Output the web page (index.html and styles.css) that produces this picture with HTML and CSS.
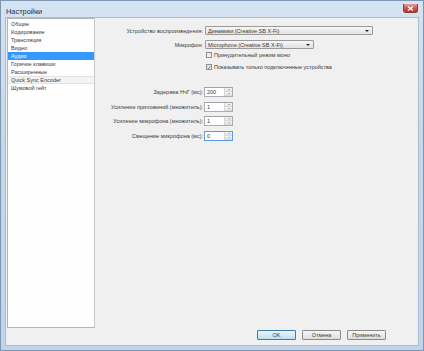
FILE: index.html
```html
<!DOCTYPE html>
<html lang="ru">
  <head>
    <meta charset="UTF-8" />
    <title>Настройки</title>
    <link rel="stylesheet" href="styles.css">
  </head>
  <body>
    <div class="window">
      <div class="titlebar">
        <span class="title">Настройки</span>
        <div class="close-btn">
          <svg width="7" height="5" viewBox="0 0 7 5">
            <path d="M1 0.5 L6 4.5 M6 0.5 L1 4.5" stroke="#fff" stroke-width="1.3" />
          </svg>
        </div>
      </div>

      <div class="client">
        <div class="main">
          <ul class="nav-list">
            <li>Общие</li>
            <li>Кодирование</li>
            <li>Трансляция</li>
            <li>Видео</li>
            <li class="selected">Аудио</li>
            <li>Горячие клавиши</li>
            <li>Расширенные</li>
            <li class="plugin">Quick Sync Encoder</li>
            <li>Шумовой гейт</li>
          </ul>

          <div class="panel">
            <div class="row row-device">
              <label class="label">Устройство воспроизведения:</label>
              <div class="combo combo-wide">
                <span>Динамики (Creative SB X-Fi)</span>
                <span class="arrow"></span>
              </div>
            </div>
            <div class="row row-mic">
              <label class="label">Микрофон:</label>
              <div class="combo combo-narrow">
                <span>Microphone (Creative SB X-Fi)</span>
                <span class="arrow"></span>
              </div>
            </div>
            <div class="check-row check-first">
              <span class="checkbox"></span>
              <span>Принудительный режим моно</span>
            </div>
            <div class="check-row">
              <span class="checkbox checked">
                <svg width="5" height="5" viewBox="0 0 5 5">
                  <path d="M0.7 2.6 L2 4 L4.4 0.8" stroke="#3b4a5e" stroke-width="0.9" fill="none" />
                </svg>
              </span>
              <span>Показывать только подключенные устройства</span>
            </div>

            <div class="spin-group">
              <div class="row spin-row">
                <label class="label">Задержка НчГ (мс):</label>
                <div class="spin">
                  <span class="spin-value">200</span>
                  <span class="spin-buttons"><i class="up"></i><i class="down"></i></span>
                </div>
              </div>
              <div class="row spin-row">
                <label class="label">Усиление приложений (множитель):</label>
                <div class="spin">
                  <span class="spin-value">1</span>
                  <span class="spin-buttons"><i class="up"></i><i class="down"></i></span>
                </div>
              </div>
              <div class="row spin-row">
                <label class="label">Усиление микрофона (множитель):</label>
                <div class="spin">
                  <span class="spin-value">1</span>
                  <span class="spin-buttons"><i class="up"></i><i class="down"></i></span>
                </div>
              </div>
              <div class="row spin-row">
                <label class="label">Смещение микрофона (мс):</label>
                <div class="spin focused">
                  <span class="spin-value">0</span>
                  <span class="spin-buttons"><i class="up"></i><i class="down"></i></span>
                </div>
              </div>
            </div>
          </div>
        </div>

        <div class="buttons">
          <button class="btn btn-default">OK</button>
          <button class="btn">Отмена</button>
          <button class="btn">Применить</button>
        </div>
      </div>
    </div>
  </body>
</html>
```

FILE: styles.css
```css
* {
  margin: 0;
  padding: 0;
  box-sizing: border-box;
}

html,
body {
  width: 424px;
  height: 351px;
  overflow: hidden;
}

body {
  font-family: "Liberation Sans", Arial, sans-serif;
  font-size: 5.5px;
  color: #3a3a3a;
  background: #c7d8ec;
}

.window {
  width: 424px;
  height: 351px;
  display: flex;
  flex-direction: column;
  padding: 0 4px 4px;
  border: 1px solid #7f96b2;
  background: linear-gradient(180deg, #d5e3f2 0%, #c6d7ea 40%, #c2d4e9 100%);
}

.titlebar {
  height: 17px;
  display: flex;
  align-items: flex-start;
  justify-content: space-between;
}

.title {
  font-size: 7.4px;
  color: #1e2f46;
  margin-top: 6px;
  margin-left: 1px;
}

.close-btn {
  width: 15px;
  height: 9px;
  margin-top: 3px;
  margin-right: 1px;
  border: 1px solid #8e3b37;
  border-top: none;
  border-radius: 0 0 3px 3px;
  background: linear-gradient(180deg, #e2a198 0%, #c9584e 50%, #b8352c 100%);
  display: flex;
  align-items: center;
  justify-content: center;
}

.client {
  flex: 1;
  background: #f0f0f0;
  border: 1px solid #a9bcd2;
  display: flex;
  flex-direction: column;
}

.main {
  display: flex;
  flex: 1;
}

/* left navigation list */
.nav-list {
  list-style: none;
  width: 88px;
  height: 310px;
  margin: 0 0 0 1px;
  background: #fdfefd;
  border: 1px solid #b4b4b4;
  border-right-color: #c8c8c8;
  padding-top: 0.5px;
}

.nav-list li {
  height: 8px;
  line-height: 8px;
  padding-left: 3px;
  white-space: nowrap;
}

.nav-list li.selected {
  background: #3399ff;
  color: #fff;
}

.nav-list li.plugin {
  background: #f3f4f4;
  border-top: 1px solid #e2e2e2;
  border-bottom: 1px solid #e2e2e2;
  line-height: 6px;
}

/* settings panel */
.panel {
  flex: 1;
  padding-top: 8px;
}

.row {
  display: flex;
  align-items: center;
}

.label {
  width: 110px;
  text-align: right;
  padding-right: 2px;
  white-space: nowrap;
}

.row-mic {
  margin-top: 5px;
}

.combo {
  height: 9px;
  display: flex;
  align-items: center;
  justify-content: space-between;
  padding: 0 3px 0 2px;
  border: 1px solid #9a9a9a;
  border-radius: 1px;
  background: linear-gradient(180deg, #f7f7f7 0%, #ececec 50%, #e2e2e2 100%);
  white-space: nowrap;
}

.combo-wide {
  width: 168px;
}

.combo-narrow {
  width: 109px;
}

.arrow {
  width: 0;
  height: 0;
  border-left: 2px solid transparent;
  border-right: 2px solid transparent;
  border-top: 2px solid #222;
}

.check-row {
  display: flex;
  align-items: center;
  gap: 2px;
  margin-left: 111px;
  height: 6px;
  margin-top: 6px;
}

.check-first {
  margin-top: 3px;
}

.checkbox {
  width: 6px;
  height: 6px;
  border: 1px solid #8f8f8f;
  background: linear-gradient(180deg, #e6e6e6, #f8f8f8);
  display: flex;
  align-items: center;
  justify-content: center;
}

.spin-group {
  margin-top: 17px;
  display: flex;
  flex-direction: column;
  gap: 4.5px;
}

.spin-row .label {
  width: 109px;
  padding-right: 1px;
}

.spin {
  width: 29px;
  height: 10px;
  display: flex;
  border: 1px solid #abadb3;
  border-top-color: #9ea1a8;
  background: #fff;
}

.spin.focused {
  border-color: #569de5;
}

.spin-value {
  flex: 1;
  padding-left: 2px;
  line-height: 8px;
}

.spin-buttons {
  width: 8px;
  display: flex;
  flex-direction: column;
  border-left: 1px solid #d6d6d6;
}

.spin-buttons i {
  flex: 1;
  display: flex;
  align-items: center;
  justify-content: center;
  background: linear-gradient(180deg, #f5f5f5, #e4e4e4);
  border-bottom: 1px solid #d9d9d9;
}

.spin-buttons i::after {
  content: "";
  border-left: 1.5px solid transparent;
  border-right: 1.5px solid transparent;
}

.spin-buttons i.up::after {
  border-bottom: 1.5px solid #777;
}

.spin-buttons i.down::after {
  border-top: 1.5px solid #777;
}

/* dialog buttons */
.buttons {
  display: flex;
  justify-content: flex-end;
  gap: 6px;
  padding: 2px 32px 5px 0;
}

.btn {
  width: 39px;
  height: 10px;
  font-family: inherit;
  font-size: 5.5px;
  color: #3a3a3a;
  border: 1px solid #8a8a8a;
  border-radius: 1px;
  background: linear-gradient(180deg, #f4f4f4 0%, #ebebeb 50%, #dcdcdc 100%);
}

.btn-default {
  border-color: #3d7bad;
  background: linear-gradient(180deg, #e9f4fb 0%, #d6ebf8 50%, #bcdcf2 100%);
}
```
